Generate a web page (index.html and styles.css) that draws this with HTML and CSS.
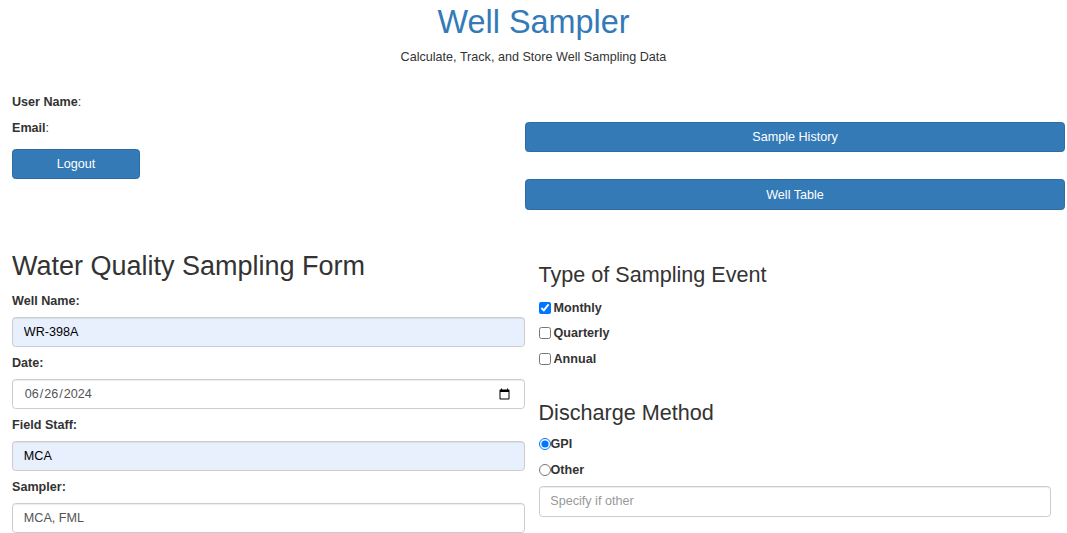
FILE: index.html
```html
<!DOCTYPE html>
<html lang="en">
<head>
<meta charset="utf-8">
<title>Well Sampler</title>
<link rel="stylesheet" href="styles.css">
</head>
<body>
<header class="header">
  <h1 class="title">Well Sampler</h1>
  <p class="subtitle">Calculate, Track, and Store Well Sampling Data</p>
</header>

<section class="top-row">
  <div class="user-col">
    <div class="user-line"><span class="strong">User Name</span>:</div>
    <div class="user-line user-line-last"><span class="strong">Email</span>:</div>
    <button class="btn btn-small" type="button">Logout</button>
  </div>
  <div class="nav-col">
    <button class="btn btn-block" type="button">Sample History</button>
    <button class="btn btn-block" type="button">Well Table</button>
  </div>
</section>

<form class="form-row">
  <div class="form-col">
    <h2 class="form-title">Water Quality Sampling Form</h2>
    <label class="field-label" for="well">Well Name:</label>
    <input class="field autofill" id="well" type="text" value="WR-398A">
    <label class="field-label" for="date">Date:</label>
    <input class="field" id="date" type="date" value="2024-06-26">
    <label class="field-label" for="staff">Field Staff:</label>
    <input class="field autofill" id="staff" type="text" value="MCA">
    <label class="field-label" for="sampler">Sampler:</label>
    <input class="field" id="sampler" type="text" value="MCA, FML">
  </div>
  <div class="side-col">
    <h3 class="side-title">Type of Sampling Event</h3>
    <label class="check-line"><input class="check" type="checkbox" checked> Monthly</label>
    <label class="check-line"><input class="check" type="checkbox"> Quarterly</label>
    <label class="check-line"><input class="check" type="checkbox"> Annual</label>
    <h3 class="side-title side-title-2">Discharge Method</h3>
    <label class="radio-line"><input class="radio" type="radio" name="dm" checked>GPI</label>
    <label class="radio-line"><input class="radio" type="radio" name="dm">Other</label>
    <input class="field other-field" type="text" placeholder="Specify if other">
  </div>
</form>
</body>
</html>
```

FILE: styles.css
```css
* { box-sizing: border-box; }

html, body {
  margin: 0;
  padding: 0;
  background: #fff;
}

body {
  font-family: "Liberation Sans", Arial, Helvetica, sans-serif;
  font-size: 12.6px;
  line-height: 18px;
  color: #333;
}

.header {
  text-align: center;
}

.title {
  margin: 5px 0 0;
  font-size: 32.4px;
  font-weight: 400;
  line-height: 35.6px;
  color: #337ab7;
}

.subtitle {
  margin: 7.6px 0 0;
  line-height: 18px;
}

.top-row {
  display: flex;
  margin-top: 27px;
  padding: 0 2px 0 12px;
}

.user-col {
  flex: 1;
  display: flex;
  flex-direction: column;
  align-items: flex-start;
}

.user-line {
  height: 18px;
  margin-bottom: 8px;
}

.user-line-last {
  margin-bottom: 11.8px;
}

.strong { font-weight: 700; }

.nav-col {
  width: 540px;
  display: flex;
  flex-direction: column;
  gap: 27px;
  padding-top: 28.8px;
}

.btn {
  display: block;
  height: 30.4px;
  padding: 0 10px;
  font-family: inherit;
  font-size: 12.6px;
  color: #fff;
  background: #337ab7;
  border: 1px solid #2e6da4;
  border-radius: 3.6px;
  cursor: pointer;
}

.btn-small { width: 128px; }
.btn-block { width: 100%; }

.form-row {
  display: grid;
  grid-template-columns: 1fr 1fr;
  column-gap: 14px;
  margin: 31px 0 0;
  padding: 0 16px 0 12px;
}

.form-col, .side-col {
  display: flex;
  flex-direction: column;
  align-items: stretch;
}

.form-title {
  margin: 11.5px 0 10px;
  font-size: 27px;
  font-weight: 400;
  line-height: 29.7px;
}

.field-label {
  display: block;
  height: 18px;
  font-weight: 700;
  margin-bottom: 6.6px;
}

.field {
  display: block;
  width: 100%;
  height: 30.6px;
  padding: 5.4px 10.8px;
  font-family: inherit;
  font-size: 12.6px;
  line-height: 18px;
  color: #555;
  background: #fff;
  border: 1px solid #ccc;
  border-radius: 3.6px;
  box-shadow: inset 0 1px 1px rgba(0, 0, 0, .075);
  margin-bottom: 6.8px;
}

.field::placeholder { color: #999; }

.autofill {
  background: #e8f0fe;
  color: #000;
}

.side-title {
  margin: 22.4px 0 11.8px;
  font-size: 21.6px;
  font-weight: 400;
  line-height: 23.8px;
}

.side-title-2 {
  margin-top: 26px;
  margin-bottom: 10px;
}

.check-line {
  display: flex;
  align-items: center;
  height: 18px;
  margin-bottom: 7.5px;
  font-weight: 700;
}

.check {
  width: 12px;
  height: 12px;
  margin: 0 3px 0 0;
}

.radio-line {
  display: flex;
  align-items: center;
  height: 18px;
  margin-bottom: 8px;
  font-weight: 700;
}

.radio {
  width: 12px;
  height: 12px;
  margin: 0;
}

.other-field {
  margin-top: -1px;
}
```
